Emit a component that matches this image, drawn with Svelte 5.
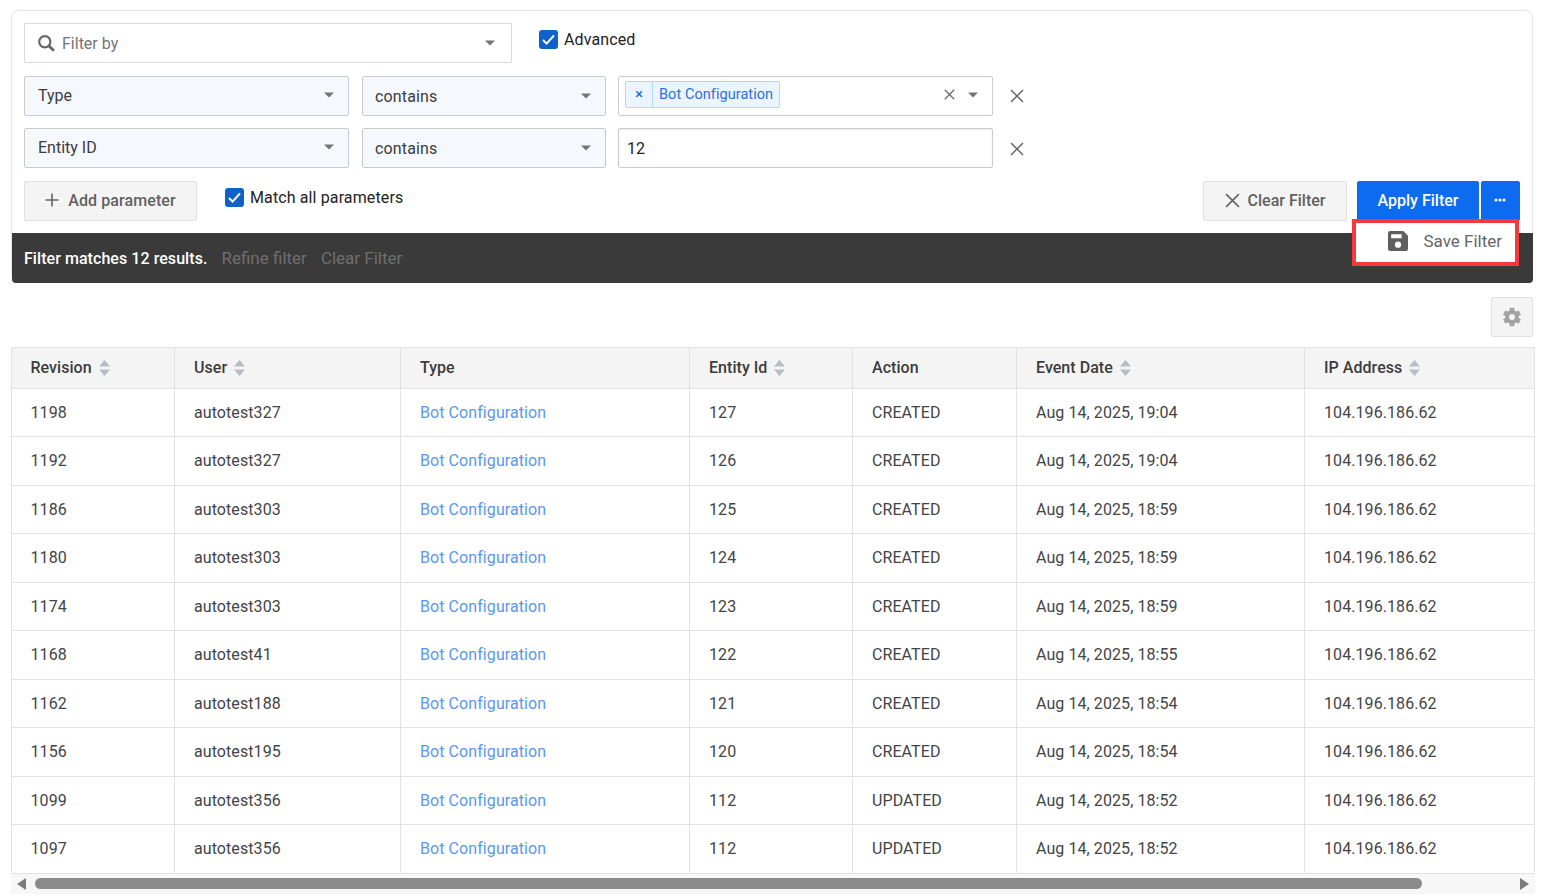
<script>
  const rows = [
    ['1198','autotest327','127','CREATED','Aug 14, 2025, 19:04'],
    ['1192','autotest327','126','CREATED','Aug 14, 2025, 19:04'],
    ['1186','autotest303','125','CREATED','Aug 14, 2025, 18:59'],
    ['1180','autotest303','124','CREATED','Aug 14, 2025, 18:59'],
    ['1174','autotest303','123','CREATED','Aug 14, 2025, 18:59'],
    ['1168','autotest41','122','CREATED','Aug 14, 2025, 18:55'],
    ['1162','autotest188','121','CREATED','Aug 14, 2025, 18:54'],
    ['1156','autotest195','120','CREATED','Aug 14, 2025, 18:54'],
    ['1099','autotest356','112','UPDATED','Aug 14, 2025, 18:52'],
    ['1097','autotest356','112','UPDATED','Aug 14, 2025, 18:52'],
  ];
  const cols = [
    ['Revision', true], ['User', true], ['Type', false], ['Entity Id', true],
    ['Action', false], ['Event Date', true], ['IP Address', true],
  ];
</script>

{#snippet caret()}
  <svg class="caret" width="12" height="6" viewBox="0 0 12 6"><path d="M1 0.5h10L6 5.5z" fill="#757575"/></svg>
{/snippet}
{#snippet check()}
  <span class="check"><svg width="19" height="19" viewBox="0 0 19 19"><path d="M4 10l3.600 3.600L15 5.400" fill="none" stroke="#fff" stroke-width="2"/></svg></span>
{/snippet}
{#snippet cross(size)}
  <svg width={size} height={size} viewBox="0 0 14 14"><path d="M1 1l12 12M13 1L1 13" fill="none" stroke="#666" stroke-width="1.500"/></svg>
{/snippet}

<div class="page">
  <section class="card">
    <div class="filters">
      <div class="row top">
        <div class="box filterby">
          <svg width="17" height="17" viewBox="0 0 17 17"><circle cx="6.800" cy="6.800" r="5.600" fill="none" stroke="#666" stroke-width="2.200"/><path d="M10.800 10.800l5 5" stroke="#666" stroke-width="2.800"/></svg>
          <span class="ph">Filter by</span>
          <span class="push"></span>
          {@render caret()}
        </div>
        <label class="checkrow adv">{@render check()}<span>Advanced</span></label>
      </div>
      <div class="row param">
        <div class="box field tint"><span class="lift">Type</span><span class="push"></span>{@render caret()}</div>
        <div class="box op tint"><span>contains</span><span class="push"></span>{@render caret()}</div>
        <div class="box val chipbox">
          <span class="chip"><span class="chipx">×</span><span class="chiptxt">Bot Configuration</span></span>
          <span class="push"></span>
          {@render cross(11)}
          <span class="gap11"></span>
          {@render caret()}
        </div>
        <button class="rm">{@render cross(14)}</button>
      </div>
      <div class="row param second">
        <div class="box field tint"><span class="lift">Entity ID</span><span class="push"></span>{@render caret()}</div>
        <div class="box op tint"><span>contains</span><span class="push"></span>{@render caret()}</div>
        <div class="box val textval"><span>12</span></div>
        <button class="rm low">{@render cross(14)}</button>
      </div>
      <div class="row actions">
        <button class="btn add"><svg width="14" height="14" viewBox="0 0 14 14"><path d="M7 0.500v13M0.500 7h13" stroke="#666" stroke-width="1.600"/></svg><span>Add parameter</span></button>
        <label class="checkrow match">{@render check()}<span>Match all parameters</span></label>
        <span class="push"></span>
        <button class="btn clear">{@render cross(15)}<span>Clear Filter</span></button>
        <button class="btn apply">Apply Filter</button>
        <button class="btn more"><svg width="12" height="4" viewBox="0 0 12 4"><circle cx="2" cy="2" r="1.500" fill="#fff"/><circle cx="6" cy="2" r="1.500" fill="#fff"/><circle cx="10" cy="2" r="1.500" fill="#fff"/></svg></button>
      </div>
    </div>
    <div class="bar">
      <strong>Filter matches 12 results.</strong>
      <span class="barlink">Refine filter</span>
      <span class="barlink">Clear Filter</span>
    </div>
    <div class="menu">
      <svg width="20" height="20" viewBox="0 0 19 19"><path fill-rule="evenodd" fill="#5f5f5f" d="M2 0h12.500L19 4.500V17a2 2 0 0 1-2 2H2a2 2 0 0 1-2-2V2a2 2 0 0 1 2-2zM3 3v4h10V3zM9.500 10a3 3 0 1 0 0 6 3 3 0 0 0 0-6z"/></svg>
      <span>Save Filter</span>
    </div>
  </section>

  <div class="tools">
    <button class="gear" aria-label="Settings">
      <svg width="22" height="22" viewBox="0 0 24 24"><path fill="#a3a3a3" d="M19.400 13a7.600 7.600 0 0 0 0-2l2.300-1.800-2.400-4.200-2.800 1.100a7.600 7.600 0 0 0-1.700-1L14.400 2H9.600l-.4 3.100a7.600 7.600 0 0 0-1.700 1L4.700 5 2.300 9.200 4.600 11a7.600 7.600 0 0 0 0 2l-2.300 1.800 2.400 4.200 2.800-1.100a7.600 7.600 0 0 0 1.700 1l.4 3.100h4.800l.4-3.100a7.600 7.600 0 0 0 1.700-1l2.800 1.100 2.400-4.200zM12 15.200a3.200 3.200 0 1 1 0-6.400 3.200 3.200 0 0 1 0 6.400z"/></svg>
    </button>
  </div>

  <div class="tablewrap">
    <table>
      <colgroup>
        <col class="c1"/><col class="c2"/><col class="c3"/><col class="c4"/><col class="c5"/><col class="c6"/><col class="c7"/>
      </colgroup>
      <thead>
        <tr>
          {#each cols as [name, sort]}
            <th>
              <span class="th">{name}{#if sort}<svg class="sort" width="11" height="16" viewBox="0 0 11 16"><path d="M5.500 0L11 6.500H0z" fill="#b9bdc2"/><path d="M0 9.500h11L5.500 16z" fill="#b9bdc2"/></svg>{/if}</span>
            </th>
          {/each}
        </tr>
      </thead>
      <tbody>
        {#each rows as r}
          <tr>
            <td>{r[0]}</td>
            <td>{r[1]}</td>
            <td class="link">Bot Configuration</td>
            <td>{r[2]}</td>
            <td>{r[3]}</td>
            <td>{r[4]}</td>
            <td>104.196.186.62</td>
          </tr>
        {/each}
      </tbody>
    </table>
    <div class="scrollbar">
      <svg width="10" height="12" viewBox="0 0 10 12"><path d="M9 0v12L0 6z" fill="#7b7b7b"/></svg>
      <div class="track"><div class="thumb"></div></div>
      <svg width="10" height="12" viewBox="0 0 10 12"><path d="M1 0v12l9-6z" fill="#7b7b7b"/></svg>
    </div>
  </div>
</div>

<style>
  :global(body) { margin: 0; background: #fff; overflow: hidden; }
  .page {
    box-sizing: border-box;
    width: 1546px;
    height: 896px;
    padding: 10px 11px 0 11px;
    font-family: Roboto, "Liberation Sans", sans-serif;
    font-size: 16px;
    color: #3c3c3c;
    overflow: hidden;
  }
  button { font-family: inherit; font-size: 16px; margin: 0; cursor: pointer; }
  .card {
    position: relative;
    box-sizing: border-box;
    width: 1522px;
    height: 273px;
    border: 1px solid #e6e6e6;
    border-bottom: 0;
    border-radius: 8px;
    display: flex;
    flex-direction: column;
  }
  .filters { flex: 1; padding: 12px 12px 0 12px; }
  .row { display: flex; }
  .top { height: 40px; }
  .param { height: 40px; margin-top: 13px; gap: 13px; }
  .param.second { margin-top: 12px; }
  .actions { height: 40px; margin-top: 13px; }
  .box {
    box-sizing: border-box;
    height: 40px;
    border: 1px solid #cacaca;
    display: flex;
    align-items: center;
    padding: 0 13px;
    color: #3c3c3c;
  }
  .tint { background: #f5f8fd; border-radius: 2px; }
  .push { flex: 1; }
  .filterby { width: 488px; border-color: #d9d9d9; padding-right: 15px; border-radius: 1px; }
  .ph { margin-left: 7px; color: #757575; font-size: 16px; }
  .checkrow { display: flex; align-items: center; gap: 6px; color: #222; font-size: 16px; letter-spacing: 0.12px; }
  .check {
    width: 19px; height: 19px; background: #0f62c9; border-radius: 3px; display: block; flex: none;
  }
  .check svg { display: block; }
  .adv { margin-left: 27px; height: 32px; align-self: flex-start; }
  .field { width: 325px; padding-right: 13px; }
  .field svg { margin-top: -3px; }
  .lift { position: relative; top: -1px; }
  .op { width: 244px; margin-left: 0; padding-left: 12px; padding-right: 13px; letter-spacing: 0.15px; }
  .val { width: 375px; margin-left: -1px; border-radius: 2px; }
  .chipbox { padding: 0 13px 0 6px; }
  .chipbox svg { margin-top: -3px; }
  .gap11 { width: 12px; }
  .chip {
    display: flex; height: 27px; box-sizing: border-box; margin-top: -3px;
    border: 1px solid #b3d7ff; border-radius: 2px; background: #ebf5ff; font-size: 14.500px; align-items: center;
  }
  .chipx { width: 26px; text-align: center; border-right: 1px solid #b3d7ff; line-height: 25px; color: #1967d2; font-size: 15px; }
  .chiptxt { padding: 0 6px; color: #2f6fe4; letter-spacing: 0.06px; }
  .textval { padding: 0 8px; box-shadow: inset 0 1px 2px rgba(0,0,0,.08); font-size: 16px; color: #222; }
  .rm { background: none; border: 0; padding: 0 0 0 2px; width: 22px; margin-left: -1px; display: flex; align-items: center; justify-content: center; }
  .rm.low { padding-top: 2px; }
  .btn {
    box-sizing: border-box; height: 40px; border: 1px solid #e0e0e0; background: #f4f4f4; color: #616161; font-weight: 500; display: flex; align-items: center; justify-content: center; border-radius: 2px; padding: 0 0 2px;
  }
  .add { width: 173px; gap: 9px; letter-spacing: 0.1px; }
  .match { margin-left: 28px; height: 32px; align-self: flex-start; }
  .clear { width: 144px; gap: 8px; }
  .apply { width: 122px; margin-left: 10px; background: #0d6bf0; border-color: #0d6bf0; color: #fff; }
  .more { width: 39px; margin-left: 2px; background: #0d6bf0; border-color: #0d6bf0; padding-right: 2px; }
  .bar {
    height: 50px; background: #3a3a3a; display: flex; align-items: center; padding: 0 12px; gap: 14px;
    border-radius: 0 0 4px 4px; color: #fff; margin: 0 -1px 0 0;
  }
  .bar strong { font-weight: 500; font-size: 16px; letter-spacing: 0.06px; }
  .barlink { color: #6f6f6f; font-size: 17px; }
  .menu {
    position: absolute; top: 208px; right: 13px; width: 167px; height: 47px; box-sizing: border-box;
    border: 4px solid #f9383e; background: #fff; display: flex; align-items: center; justify-content: flex-end; gap: 15px; padding: 0 13px 4px 0; color: #666; font-size: 17px;
  }
  .tools { display: flex; justify-content: flex-end; margin-top: 14px; width: 1522px; }
  .gear {
    width: 42px; height: 40px; background: #f4f4f4; border: 1px solid #e0e0e0; border-radius: 2px; display: flex; align-items: center; justify-content: center; padding: 0;
  }
  .tablewrap { margin-top: 10px; width: 1524px; }
  table { border-collapse: collapse; table-layout: fixed; width: 1524px; border: 1px solid #e2e2e2; }
  .c1 { width: 163px; } .c2 { width: 226px; } .c3 { width: 289px; } .c4 { width: 163px; }
  .c5 { width: 164px; } .c6 { width: 288px; } .c7 { width: 230px; }
  th, td { border: 1px solid #e2e2e2; padding: 0 0 0 19px; text-align: left; }
  th { height: 39.500px; background: #f4f4f4; font-weight: 500; color: #3c3c3c; letter-spacing: 0.04px; }
  th:first-child, td:first-child { padding-left: 18.500px; }
  .th { display: flex; align-items: center; gap: 7px; }
  .sort { flex: none; }
  td { height: 47.500px; color: #444; letter-spacing: 0.08px; }
  .link { color: #5a97ee; }
  .scrollbar { height: 20px; background: #f7f7f7; display: flex; align-items: center; padding: 0 6px 0 6px; gap: 8px; }
  .track { flex: 1; }
  .thumb { width: 1387px; height: 11px; background: #8a8a8a; border-radius: 6px; }
</style>
